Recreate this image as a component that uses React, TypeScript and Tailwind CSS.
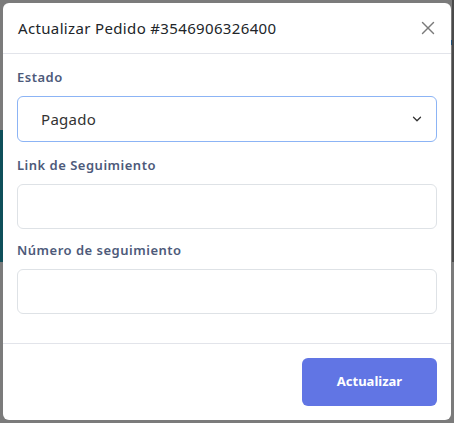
import { ChevronDown, X } from 'lucide-react';

// ─── Field label ──────────────────────────────────────────────────────────────

function Label({ children }: { children: React.ReactNode }) {
  return (
    <label className="block h-[20px] leading-[20px] text-[13px] font-semibold tracking-[0.5px] text-[#4d5a7a] mb-[9px]">
      {children}
    </label>
  );
}

// ─── Modal ────────────────────────────────────────────────────────────────────

function UpdateOrderModal() {
  return (
    <div className="relative flex flex-col h-[417px] bg-white rounded-[6px] overflow-hidden">
      {/* Header */}
      <div className="flex items-center justify-between h-[51px] pl-[15px] pr-[12px] border-b border-[#e2e4ea]">
        <h5 className="text-[15px] text-[#212529] font-normal tracking-[0.35px]">
          Actualizar Pedido #3546906326400
        </h5>
        <button className="text-[#7a7a7a]">
          <X size={22} strokeWidth={1.5} />
        </button>
      </div>

      {/* Body */}
      <div className="flex-1 px-[14px] pt-[13px]">
        <Label>Estado</Label>
        <div className="flex items-center justify-between h-[46px] rounded-[6px] border border-[#8cb4f5] pl-[23px] pr-[12px]">
          <span className="text-[15px] text-[#333333] tracking-[0.3px]">Pagado</span>
          <ChevronDown size={14} strokeWidth={2.2} className="text-[#333]" />
        </div>

        <div className="mt-[13px]">
          <Label>Link de Seguimiento</Label>
          <input className="block w-full h-[45px] rounded-[6px] border border-[#dee2e6] outline-none px-3" />
        </div>

        <div className="mt-[11px]">
          <Label>Número de seguimiento</Label>
          <input className="block w-full h-[45px] rounded-[6px] border border-[#dee2e6] outline-none px-3" />
        </div>
      </div>

      {/* Footer */}
      <div className="flex justify-end border-t border-[#e2e4ea] px-[14px] pt-[14px] pb-[14px]">
        <button className="w-[135px] h-[48px] rounded-[6px] bg-[#6175e4] text-white text-[13px] font-bold">
          Actualizar
        </button>
      </div>
    </div>
  );
}

export default function App() {
  return (
    <div
      className="relative h-[423px] w-[454px] bg-[#7b7b7b] p-[3px] overflow-hidden"
      style={{ fontFamily: '"Noto Sans", sans-serif' }}
    >
      {/* page behind the backdrop */}
      <div className="absolute left-0 top-[130px] w-[4px] h-[132px] bg-[#0f4f5a]" />
      <div className="absolute right-0 top-[40px] w-[4px] h-[5px] bg-[#1d4f7a]" />
      <div className="absolute right-0 top-0 w-[2px] h-[262px] bg-[#4a4a4a]" />
      <UpdateOrderModal />
    </div>
  );
}
